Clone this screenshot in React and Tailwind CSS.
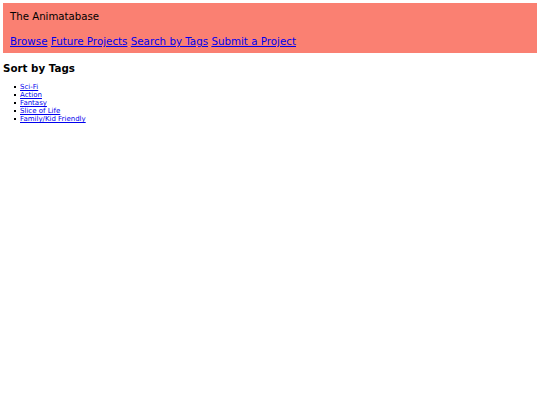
import React from 'react';

const tags = ['Sci-Fi', 'Action', 'Fantasy', 'Slice of Life', 'Family/Kid Friendly'];
const links = ['Browse', 'Future Projects', 'Search by Tags', 'Submit a Project'];

export default function App() {
  return (
    <div className="min-h-[405px] bg-white p-[3px] text-black" style={{ fontFamily: '"DejaVu Sans", Verdana, sans-serif' }}>
      {/* Header */}
      <header className="bg-[#fa8072] h-[50px] px-[7px] pt-[7px]">
        <div className="text-[10.2px] leading-[14px]">The Animatabase</div>
        <nav className="mt-[10px] text-[10.3px] leading-[14px]">
          {links.map((l, i) => (
            <React.Fragment key={l}>
              {i > 0 && ' '}
              <a href="#" className="text-[#0000ee] underline">{l}</a>
            </React.Fragment>
          ))}
        </nav>
      </header>

      <h2 className="mt-[8px] text-[10.3px] font-bold leading-[14px]">Sort by Tags</h2>
      <ul className="mt-[8px] pl-[11px] text-[7px] leading-[8px]">
        {tags.map((t) => (
          <li key={t} className="flex items-center">
            <span className="mr-[4px] h-[2px] w-[2px] bg-black" />
            <a href="#" className="text-[#0000ee] underline">{t}</a>
          </li>
        ))}
      </ul>
    </div>
  );
}
